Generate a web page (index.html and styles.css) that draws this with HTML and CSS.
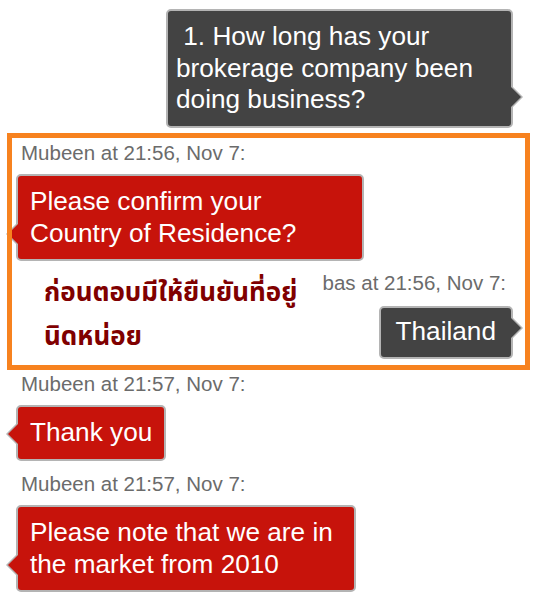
FILE: index.html
```html
<!DOCTYPE html>
<html lang="en">
<head>
<meta charset="utf-8">
<title>Chat</title>
<link rel="stylesheet" href="styles.css">
</head>
<body>
<div class="chat">
  <div class="bubble dark question">&nbsp;1. How long has your brokerage company been doing business?</div>

  <div class="highlight">
    <div class="meta">Mubeen at 21:56, Nov 7:</div>
    <div class="bubble red wide">Please confirm your Country of Residence?</div>
    <div class="row">
      <div class="thai">ก่อนตอบมีให้ยืนยันที่อยู่<br>นิดหน่อย</div>
      <div class="reply">
        <div class="meta meta-right">bas at 21:56, Nov 7:</div>
        <div class="bubble dark short">Thailand</div>
      </div>
    </div>
  </div>

  <div class="meta after-box">Mubeen at 21:57, Nov 7:</div>
  <div class="bubble red">Thank you</div>
  <div class="meta">Mubeen at 21:57, Nov 7:</div>
  <div class="bubble red narrow">Please note that we are in the market from 2010</div>
</div>
</body>
</html>
```

FILE: styles.css
```css
body {
  margin: 0;
  background: #ffffff;
  font-family: "Liberation Sans", Arial, sans-serif;
}

.chat {
  display: flex;
  flex-direction: column;
  align-items: flex-start;
  padding: 9px 21px 0 16px;
}

.meta {
  font-size: 20.5px;
  line-height: 23px;
  color: #6b6b6b;
  margin-left: 5px;
  margin-top: 11px;
}

.highlight .meta:first-child {
  margin-top: 0;
}

.meta.after-box {
  margin-top: 1.5px;
}

.bubble {
  position: relative;
  box-sizing: border-box;
  border: 2px solid #b4b4b4;
  border-radius: 5px;
  padding: 10px 12px;
  font-size: 26.2px;
  line-height: 31.5px;
  color: #ffffff;
  margin-top: 10.5px;
}

.bubble::before,
.bubble::after {
  content: "";
  position: absolute;
  width: 0;
  height: 0;
  border-style: solid;
}

.red {
  background: #c7130b;
}

.red::before {
  left: -12px;
  bottom: 13px;
  border-width: 12px 12px 12px 0;
  border-color: transparent #b4b4b4 transparent transparent;
}

.red::after {
  left: -10px;
  bottom: 15px;
  border-width: 10px 10px 10px 0;
  border-color: transparent #c7130b transparent transparent;
}

.dark {
  background: #434343;
}

.dark::before {
  right: -12px;
  bottom: 17px;
  border-width: 12px 0 12px 12px;
  border-color: transparent transparent transparent #b4b4b4;
}

.dark::after {
  right: -10px;
  bottom: 19px;
  border-width: 10px 0 10px 10px;
  border-color: transparent transparent transparent #434343;
}

.question {
  align-self: flex-end;
  width: 347px;
  padding: 10px 8px;
  margin-top: 0;
}

.wide {
  width: 348px;
}

.narrow {
  width: 340px;
}

.short {
  padding: 8.75px 15px;
  margin-top: 11.5px;
}

.highlight {
  position: relative;
  align-self: stretch;
  margin: 5px -17px 0 -9px;
  padding: 8px 17px 11px 9px;
}

.highlight::after {
  content: "";
  position: absolute;
  inset: 0;
  border: 5px solid #f7821f;
  pointer-events: none;
  z-index: 2;
}

.row {
  display: flex;
  justify-content: space-between;
  align-items: flex-start;
  margin-top: 10px;
}

.thai {
  margin-left: 28px;
  font-family: Tahoma, "Noto Sans Thai", "Noto Sans", "DejaVu Sans", sans-serif;
  font-size: 26px;
  font-weight: bold;
  line-height: 44px;
  color: #800000;
}

.reply {
  display: flex;
  flex-direction: column;
  align-items: flex-end;
}

.meta-right {
  margin: 0 7px 0 0;
}
```
